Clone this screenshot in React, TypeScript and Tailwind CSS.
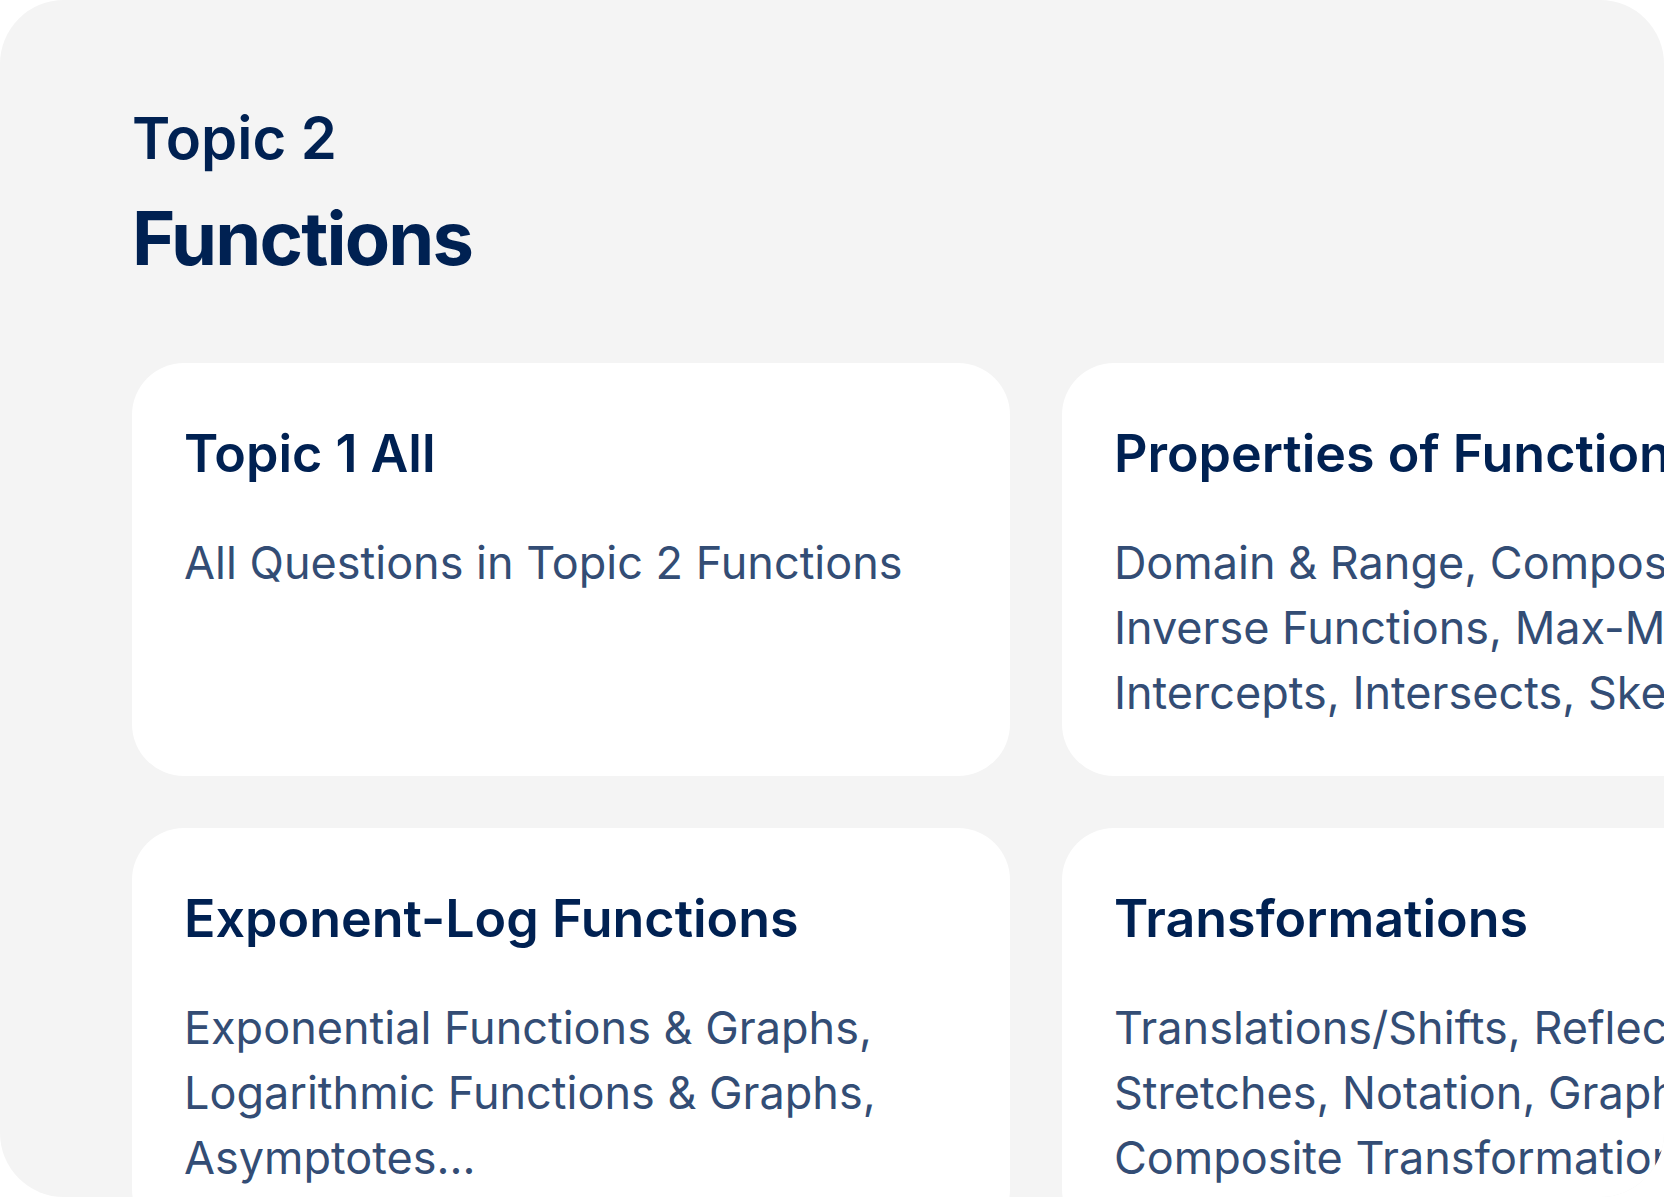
type Topic = { title: string; lines: string[] };

const topics: Topic[] = [
  { title: "Topic 1 All", lines: ["All Questions in Topic 2 Functions"] },
  {
    title: "Properties of Functions",
    lines: ["Domain & Range, Composite,", "Inverse Functions, Max-Min,", "Intercepts, Intersects, Sketch..."],
  },
  {
    title: "Exponent-Log Functions",
    lines: ["Exponential Functions & Graphs,", "Logarithmic Functions & Graphs,", "Asymptotes..."],
  },
  {
    title: "Transformations",
    lines: ["Translations/Shifts, Reflections,", "Stretches, Notation, Graphs,", "Composite Transformations..."],
  },
];

function TopicCard({ title, lines }: Topic) {
  return (
    <a href="#" className="block rounded-[52px] bg-white px-[52px] pt-[52px] pb-[51px]">
      <h2 className="mb-[37px] text-[52px] leading-[78px] font-semibold whitespace-nowrap text-[#002152]">{title}</h2>
      <p className="text-[45px] leading-[65px] whitespace-nowrap text-[#334d75]">
        {lines.map((line) => (
          <span key={line} className="block">
            {line}
          </span>
        ))}
      </p>
    </a>
  );
}

export default function App() {
  return (
    <main className="h-screen overflow-hidden rounded-[64px] bg-[#f4f4f4] pt-24 pl-[132px] font-['Inter',sans-serif]">
      <header className="mb-[75px] text-[#002152]">
        <p className="text-[58px] leading-[84px] font-semibold">Topic 2</p>
        <h1 className="mt-2 text-[74px] leading-[100px] font-bold tracking-tight">Functions</h1>
      </header>
      <section className="grid w-[118%] grid-cols-2 gap-[52px]">
        {topics.map((topic) => (
          <TopicCard key={topic.title} {...topic} />
        ))}
      </section>
    </main>
  );
}
